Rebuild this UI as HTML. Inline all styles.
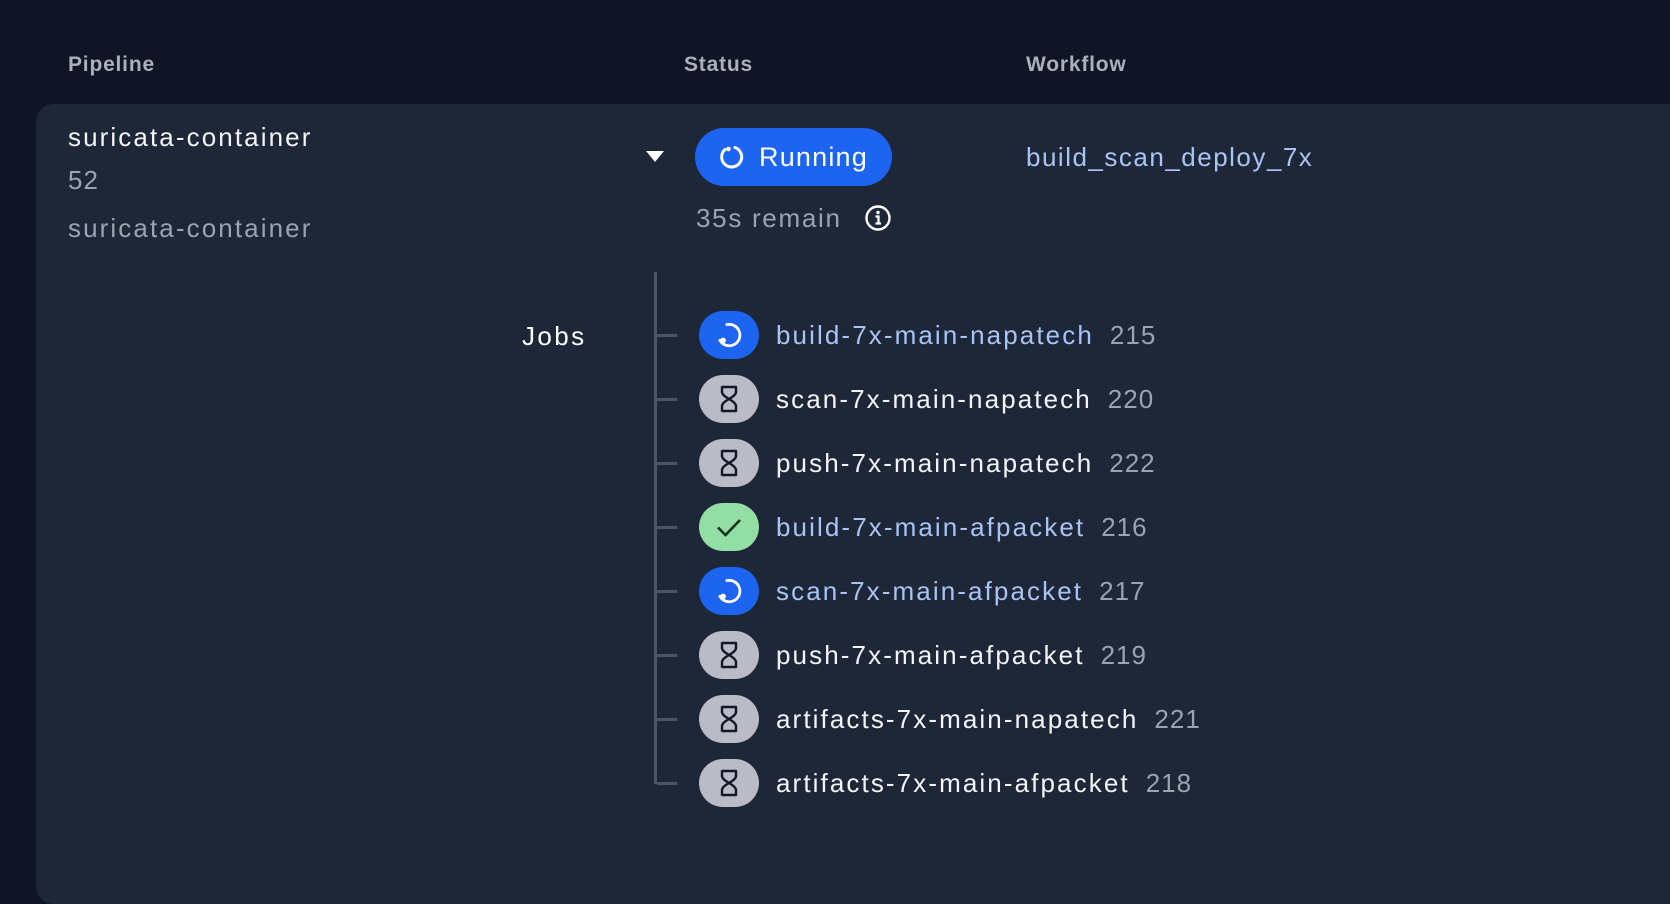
<!DOCTYPE html>
<html><head><meta charset="utf-8"><style>
*{margin:0;padding:0;box-sizing:border-box}
body{width:1670px;height:838px;background:#0f1524;font-family:"Liberation Sans",sans-serif;position:relative;overflow:hidden;color:#f3f4f6}
.a{position:absolute;white-space:nowrap;line-height:1}
.h{font-size:21px;color:#aab0bc;font-weight:bold;top:54px;letter-spacing:0.8px}
.card{position:absolute;left:36px;top:104px;width:1700px;height:800px;background:#1e2738;border-radius:18px}
.pill{position:absolute;left:699px;width:60px;height:48px;border-radius:24px;display:flex;align-items:center;justify-content:center}
.tick{position:absolute;left:657px;width:20px;height:3px;background:#4b5563}
.jt{position:absolute;left:776px;font-size:26px;line-height:1;white-space:nowrap;letter-spacing:2.1px}
.jt span{color:#9ca3af;margin-left:16px;letter-spacing:1px}
.lk{color:#a9c4f3}
</style></head><body>
<div class="a h" style="left:68px">Pipeline</div>
<div class="a h" style="left:684px">Status</div>
<div class="a h" style="left:1026px">Workflow</div>
<div class="card"></div>
<div class="a" style="left:68px;top:124px;font-size:26px;color:#f3f4f6;letter-spacing:2.1px">suricata-container</div>
<div class="a" style="left:68px;top:167px;font-size:26px;color:#9ca3af;letter-spacing:1px">52</div>
<div class="a" style="left:68px;top:215px;font-size:26px;color:#9ca3af;letter-spacing:2.1px">suricata-container</div>
<svg class="a" style="left:646px;top:151px" width="18" height="12"><path d="M0 0H18L9 11Z" fill="#fff"/></svg>
<div class="a" style="left:695px;top:128px;width:197px;height:58px;border-radius:29px;background:#1d64f0"></div>
<svg class="a" style="left:718px;top:143px" width="28" height="28" viewBox="0 0 28 28"><path d="M17 4.5A10 10 0 1 1 7 6.5" fill="none" stroke="#fff" stroke-width="3" stroke-linecap="round"/><circle cx="10.5" cy="6" r="2.3" fill="#fff"/></svg>
<div class="a" style="left:759px;top:144px;font-size:27px;color:#fff;letter-spacing:1.2px">Running</div>
<div class="a" style="left:696px;top:205px;font-size:26px;color:#9ca3af;letter-spacing:1.7px">35s remain</div>
<svg class="a" style="left:864px;top:204px" width="28" height="28" viewBox="0 0 28 28"><circle cx="14" cy="14" r="11.5" fill="none" stroke="#fff" stroke-width="2.4"/><circle cx="14" cy="8.5" r="1.7" fill="#fff"/><path d="M11.5 12.5H14.5V19.5M11.5 19.5H17" fill="none" stroke="#fff" stroke-width="2.2"/></svg>
<div class="a lk" style="left:1026px;top:144px;font-size:26px;letter-spacing:1.5px">build_scan_deploy_7x</div>
<div class="a" style="left:522px;top:323px;font-size:26px;color:#fff;letter-spacing:2.4px">Jobs</div>
<div class="a" style="left:654px;top:272px;width:3px;height:512px;background:#4b5563"></div>
<div id="jobs"></div>
<script>
var jobs=[["r","build-7x-main-napatech","215"],["w","scan-7x-main-napatech","220"],["w","push-7x-main-napatech","222"],["d","build-7x-main-afpacket","216"],["r","scan-7x-main-afpacket","217"],["w","push-7x-main-afpacket","219"],["w","artifacts-7x-main-napatech","221"],["w","artifacts-7x-main-afpacket","218"]];
var h="";
jobs.forEach(function(j,i){var c=335+i*64;
var bg=j[0]=="r"?"#1d64f0":j[0]=="d"?"#93dea4":"#b9bcc6";
var ic=j[0]=="r"?'<svg width="30" height="30" viewBox="0 0 28 28"><path d="M12 4.3A10 10 0 1 1 5.5 19" fill="none" stroke="#fff" stroke-width="2.6" stroke-linecap="round"/><circle cx="8.5" cy="19" r="2.6" fill="#fff"/></svg>':
j[0]=="d"?'<svg width="32" height="32" viewBox="0 0 32 32"><path d="M5 16.5L12.5 24L27 9" fill="none" stroke="#14321d" stroke-width="2.6"/></svg>':
'<svg width="22" height="28" viewBox="0 0 22 28"><path d="M4 2H18V7Q18 10 11 14Q4 10 4 7ZM4 26H18V21Q18 18 11 14Q4 18 4 21Z" fill="none" stroke="#111827" stroke-width="2.4" stroke-linejoin="round"/></svg>';
h+='<div class="tick" style="top:'+(c-1)+'px"></div><div class="pill" style="top:'+(c-24)+'px;background:'+bg+'">'+ic+'</div><div class="jt'+(j[0]=="w"?"":" lk")+'" style="top:'+(c-13)+'px;'+(j[0]=="w"?"color:#f3f4f6":"")+'">'+j[1]+'<span>'+j[2]+'</span></div>';});
document.getElementById("jobs").innerHTML=h;
</script>
</body></html>
